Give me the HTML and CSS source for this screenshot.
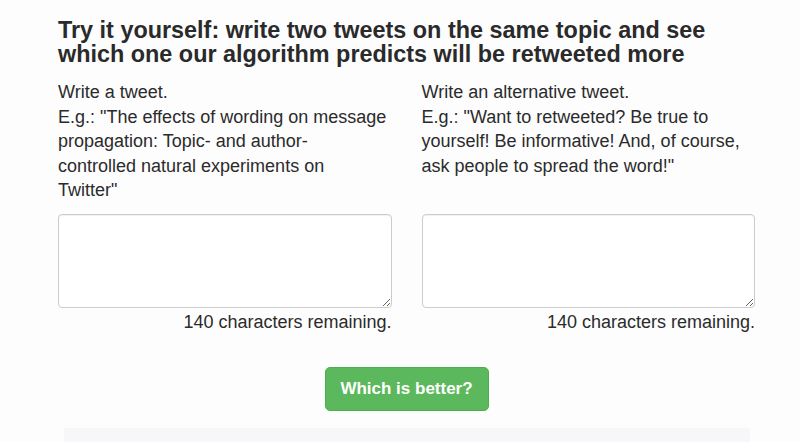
FILE: index.html
```html
<!DOCTYPE html>
<html lang="en">
<head>
<meta charset="utf-8">
<title>Which tweet is better?</title>
<link rel="stylesheet" href="styles.css">
</head>
<body>
<div class="container">
  <h2 class="title">Try it yourself: write two tweets on the same topic and see which one our algorithm predicts will be retweeted more</h2>
  <form class="row">
    <div class="col">
      <label class="prompt" for="t1">Write a tweet.<br>E.g.: "The effects of wording on message propagation: Topic- and author-<br>controlled natural experiments on<br>Twitter"</label>
      <textarea id="t1" class="tweet"></textarea>
      <div class="counter">140 characters remaining.</div>
    </div>
    <div class="col">
      <label class="prompt" for="t2">Write an alternative tweet.<br>E.g.: "Want to retweeted? Be true to yourself! Be informative! And, of course, ask people to spread the word!"</label>
      <textarea id="t2" class="tweet"></textarea>
      <div class="counter">140 characters remaining.</div>
    </div>
  </form>
  <div class="actions">
    <button type="button" class="btn">Which is better?</button>
  </div>
  <div class="well"></div>
</div>
</body>
</html>
```

FILE: styles.css
```css
html, body {
  margin: 0;
  padding: 0;
  background: #fdfdfe;
}
body {
  font-family: "Liberation Sans", Arial, Helvetica, sans-serif;
  color: #2b2b2b;
  overflow: hidden;
}
.container {
  width: 727px;
  margin: 0 0 0 43px;
  padding-top: 18px;
}
.title {
  margin: 0 15px;
  font-size: 23.4px;
  line-height: 24px;
  font-weight: bold;
  color: #2a2a2a;
}
.row {
  display: flex;
  margin-top: 14px;
}
.col {
  flex: 1 1 0;
  padding: 0 15px;
  display: flex;
  flex-direction: column;
}
.prompt {
  display: block;
  font-size: 18px;
  line-height: 24.6px;
  height: 123px;
}
.tweet {
  display: block;
  box-sizing: border-box;
  width: 100%;
  height: 94px;
  margin-top: 11px;
  border: 1px solid #cccccc;
  border-radius: 4px;
  background: #fff;
  box-shadow: inset 0 1px 1px rgba(0,0,0,0.06);
  font: inherit;
}
.counter {
  text-align: right;
  font-size: 18px;
  line-height: 26px;
  margin-top: 1px;
}
.actions {
  display: flex;
  justify-content: center;
  margin-top: 32px;
}
.btn {
  width: 164px;
  height: 44px;
  background: #5cb85c;
  border: 1px solid #4cae4c;
  border-radius: 5px;
  color: #fff;
  font-family: "Liberation Sans", Arial, sans-serif;
  font-weight: bold;
  font-size: 17px;
}
.well {
  margin: 17px 20px 0 21px;
  height: 14px;
  background: #f7f7f9;
}
```
